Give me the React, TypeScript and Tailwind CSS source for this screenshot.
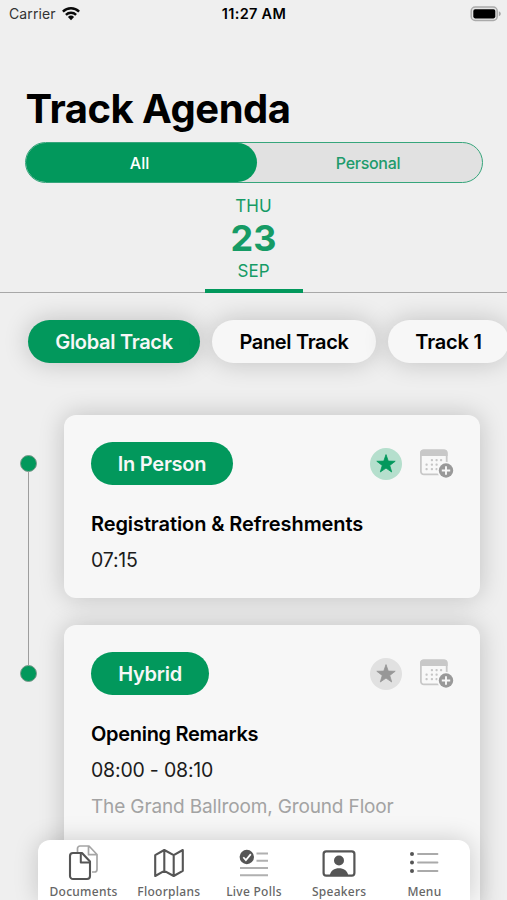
import React from "react";

const tracks = [
  { name: "Global Track", active: true, box: "w-[172px]", text: "tracking-[-0.3px]" },
  { name: "Panel Track", active: false, box: "w-[164px]", text: "tracking-[-0.35px]" },
  { name: "Track 1", active: false, box: "w-[121px]", text: "tracking-[-0.2px]" },
];

function Wifi() {
  return (
    <svg className="ml-[5px] h-[15px] w-[20px]" viewBox="0 0 20 15">
      <g fill="none" stroke="#0a0a0a" strokeWidth="2.4">
        <path d="M1.9 5.6a11.6 11.6 0 0 1 16.2 0" />
        <path d="M4.9 8.8a7.3 7.3 0 0 1 10.2 0" />
      </g>
      <path d="M6.9 11a4.5 4.5 0 0 1 6.2 0L10 14.2z" fill="#0a0a0a" />
    </svg>
  );
}

function Battery() {
  return (
    <svg className="h-[16px] w-[32px]" viewBox="0 0 32 16">
      <rect x="1.2" y="1" width="26" height="13.5" rx="4" fill="#e4e4e4" stroke="#aaaaaa" strokeWidth="1.5" />
      <rect x="3.3" y="3.2" width="22" height="9.2" rx="1.8" fill="#000" />
      <path d="M28.8 5.2c1.2.4 2 1.3 2 2.5s-.8 2.1-2 2.5z" fill="#a5a5a5" />
    </svg>
  );
}

function Star({ on }: { on: boolean }) {
  return (
    <svg className="h-8 w-8" viewBox="0 0 32 32">
      <circle cx="16" cy="16" r="16" fill={on ? "#b5dfcd" : "#e1e1e1"} />
      <path
        d="M16 6.6l2.25 6.5 6.95.15-5.45 4.2 1.95 6.55L16 20.1 10.3 24l1.95-6.55-5.45-4.2 6.95-.15z"
        fill={on ? "#02985c" : "#979797"}
        stroke={on ? "#02985c" : "#979797"}
        strokeWidth="0.8"
        strokeLinejoin="round"
      />
    </svg>
  );
}

function CalendarAdd() {
  const dots = [
    [11.8, 11], [16.5, 11], [21, 11],
    [6.5, 15.5], [11.8, 15.5], [16.5, 15.5],
    [6.5, 20], [11.8, 20], [16.5, 20],
  ];
  return (
    <svg className="h-[30px] w-[35px]" viewBox="0 0 35 30">
      <rect x="0.9" y="1.4" width="25.8" height="24" rx="3" fill="#f8f8f8" stroke="#c8c8c8" strokeWidth="1.8" />
      <path d="M0 7V4Q0 .5 3.5.5h20.600Q27.600 .5 27.600 4v3z" fill="#c8c8c8" />
      {dots.map(([x, y]) => (
        <rect key={`${x}-${y}`} x={x - 1} y={y - 1} width="2.2" height="2.2" rx="0.8" fill="#c6c6c6" />
      ))}
      <circle cx="26" cy="21.5" r="8.7" fill="#f8f8f8" />
      <circle cx="26" cy="21.5" r="7.2" fill="#999" />
      <path d="M26 17.3v8.4M21.8 21.5h8.4" stroke="#f8f8f8" strokeWidth="1.9" />
    </svg>
  );
}

function DocumentsIcon() {
  return (
    <svg className="h-[36px] w-[32px]" viewBox="0 0 32 36" fill="none" strokeLinejoin="round">
      <path d="M9.5 7V3.5a2.5 2.5 0 0 1 2.5-2.5h9l8 8.5v15a2.5 2.5 0 0 1-2.5 2.5H24M20.5 1.2v8.5h8.5" stroke="#a5a5a5" strokeWidth="1.7" />
      <path d="M5 8h9l8 8.5v14.5a3 3 0 0 1-3 3H5a3 3 0 0 1-3-3V11a3 3 0 0 1 3-3z" fill="#fff" stroke="#555" strokeWidth="2.1" />
      <path d="M12.8 8v9.5H22" stroke="#555" strokeWidth="2" />
    </svg>
  );
}

function FloorplansIcon() {
  return (
    <svg className="h-[30px] w-[32px]" viewBox="0 0 32 30" fill="none" stroke="#555" strokeWidth="2.1" strokeLinejoin="round">
      <path d="M2.2 7.2L11.3 2l9.4 5.2L29.8 2v20.8l-9.1 5.2-9.4-5.2-9.1 5.2zM11.3 2v20.8M20.7 7.2V28" />
    </svg>
  );
}

function PollsIcon() {
  return (
    <svg className="h-[28px] w-[30px]" viewBox="0 0 30 28">
      <path d="M17.5 4.5H29M17.5 11.7H29M1 19H29M1 26.2H29" stroke="#b0b0b0" strokeWidth="1.9" />
      <circle cx="7.8" cy="8" r="7.2" fill="#555" />
      <path d="M4.3 8.2l2.6 2.9 4.9-6" fill="none" stroke="#fff" strokeWidth="1.7" />
    </svg>
  );
}

function SpeakersIcon() {
  return (
    <svg className="h-[27px] w-[34px]" viewBox="0 0 34 27">
      <rect x="1.6" y="1.4" width="30.8" height="24.2" rx="2.6" fill="#fff" stroke="#555" strokeWidth="2.2" />
      <circle cx="17" cy="10.5" r="5" fill="#555" />
      <path d="M7.7 25.5c1-5 4.6-7.3 9.3-7.3s8.3 2.3 9.3 7.3z" fill="#555" />
    </svg>
  );
}

function MenuIcon() {
  return (
    <svg className="h-[24px] w-[30px]" viewBox="0 0 30 24">
      {[3, 11.5, 20].map((y) => (
        <g key={y}>
          <circle cx="3" cy={y} r="2" fill="#555" />
          <path d={`M9 ${y}H28.5`} stroke="#aaa" strokeWidth="1.8" strokeLinecap="round" />
        </g>
      ))}
    </svg>
  );
}

const nav = [
  { label: "Documents", icon: <DocumentsIcon /> },
  { label: "Floorplans", icon: <FloorplansIcon /> },
  { label: "Live Polls", icon: <PollsIcon /> },
  { label: "Speakers", icon: <SpeakersIcon /> },
  { label: "Menu", icon: <MenuIcon /> },
];

function Card(props: { kind: string; kindWidth: string; title: string; titleText: string; time: string; place?: string; on: boolean; size: string }) {
  return (
    <article className={`w-[416px] shrink-0 rounded-[12px] bg-[#f7f7f7] pt-[27px] pr-[25px] pl-[27px] shadow-[0_0_26px_rgba(0,0,0,0.2)] ${props.size}`}>
      <div className="flex h-[43px] items-center">
        <span className={`flex h-[43px] items-center justify-center rounded-full bg-[#02985c] text-[20px] font-semibold tracking-[-0.25px] text-[#f7f7f7] ${props.kindWidth}`}>
          {props.kind}
        </span>
        <div className="ml-auto flex items-center gap-[18px]">
          <Star on={props.on} />
          <CalendarAdd />
        </div>
      </div>
      <h2 className={`mt-[25px] text-[20px] leading-[28px] font-semibold text-black ${props.titleText}`}>{props.title}</h2>
      <p className="mt-[8px] text-[19.5px] leading-[28px] tracking-[-0.2px] text-[#1c1c1c]">{props.time}</p>
      {props.place && <p className="mt-[9px] text-[19px] leading-[28px] tracking-[-0.14px] text-[#a3a3a3]">{props.place}</p>}
    </article>
  );
}

export default function App() {
  return (
    <div className="relative flex h-[900px] w-[507px] flex-col overflow-hidden bg-[#efefef] font-['Inter','Liberation_Sans',sans-serif] text-black">
      <header className="grid h-[27px] shrink-0 grid-cols-3 items-center pr-[5px] pl-[9px] text-[14px]">
        <div className="flex items-center tracking-[0.1px] text-[#333]">
          <span>Carrier</span>
          <Wifi />
        </div>
        <span className="-ml-[3px] text-center text-[14.5px] font-semibold tracking-[0.3px]">11:27 AM</span>
        <div className="flex justify-end"><Battery /></div>
      </header>

      <h1 className="mt-[58px] shrink-0 pl-[25.5px] text-[40px] leading-[48px] font-bold tracking-[-0.5px]">Track Agenda</h1>

      <div className="mt-[9px] ml-[25px] flex h-[41px] w-[458px] shrink-0 overflow-hidden rounded-full border-[1.5px] border-[#36a57b] bg-[#e1e1e1] text-[16px] font-medium text-[#209b6b]">
        <div className="flex w-[231px] items-center justify-center rounded-r-full bg-[#02985c] text-white">
          <span className="-translate-x-[2px]">All</span>
        </div>
        <div className="flex flex-1 items-center justify-center pr-[3px] tracking-[-0.3px]">Personal</div>
      </div>

      <section className="flex h-[110px] shrink-0 flex-col items-center border-b border-[#a8a8a8] text-[#169b65]">
        <div className="flex h-[110px] w-[98px] shrink-0 flex-col items-center border-b-[4px] border-[#02985c] pt-[11px]">
          <span className="text-[17px] leading-[24px]">THU</span>
          <span className="text-[36px] leading-[40px] font-bold">23</span>
          <span className="mt-[1px] text-[17px] leading-[24px]">SEP</span>
        </div>
      </section>

      <nav className="mt-[27px] ml-[28px] flex h-[43px] shrink-0 gap-[12px] text-[20px] font-semibold">
        {tracks.map((t) => (
          <button
            key={t.name}
            className={`flex shrink-0 items-center justify-center rounded-full shadow-[0_0_26px_rgba(0,0,0,0.2)] ${t.box} ${t.text} ${t.active ? "bg-[#02985c] text-[#f7f7f7]" : "bg-[#f7f7f7] text-black"}`}
          >
            {t.name}
          </button>
        ))}
      </nav>

      <main className="mt-[52px] flex flex-col">
        <div className="flex h-[210px] shrink-0">
          <div className="mr-[7px] flex w-[57px] flex-col items-center pt-[40px]">
            <i className="h-[17px] w-[17px] rounded-full border border-[#7d9a8d] bg-[#02985c]" />
            <i className="w-px flex-1 bg-[#9d9d9d]" />
          </div>
          <Card kind="In Person" kindWidth="w-[142px]" title="Registration & Refreshments" titleText="tracking-[-0.09px]" time="07:15" on size="h-[183px]" />
        </div>
        <div className="flex shrink-0">
          <div className="mr-[7px] flex w-[57px] flex-col items-center">
            <i className="h-[40px] w-px bg-[#9d9d9d]" />
            <i className="h-[17px] w-[17px] rounded-full border border-[#7d9a8d] bg-[#02985c]" />
          </div>
          <Card kind="Hybrid" kindWidth="w-[118px]" title="Opening Remarks" titleText="tracking-[-0.3px]" time="08:00 - 08:10" place="The Grand Ballroom, Ground Floor" on={false} size="h-[290px]" />
        </div>
      </main>

      <footer className="absolute bottom-0 left-[38px] flex h-[60px] w-[432px] rounded-t-[12px] bg-white pr-[3px] pl-[3px] shadow-[0_0_24px_rgba(0,0,0,0.18)]">
        {nav.map((n) => (
          <div key={n.label} className="flex flex-1 flex-col items-center">
            <div className="flex h-[46px] shrink-0 items-center justify-center">{n.icon}</div>
            <span className="-mt-[3px] font-['Noto_Sans','Open_Sans',sans-serif] text-[12px] leading-[17px] font-medium tracking-[0.28px] whitespace-nowrap text-[#666]">{n.label}</span>
          </div>
        ))}
      </footer>
    </div>
  );
}
